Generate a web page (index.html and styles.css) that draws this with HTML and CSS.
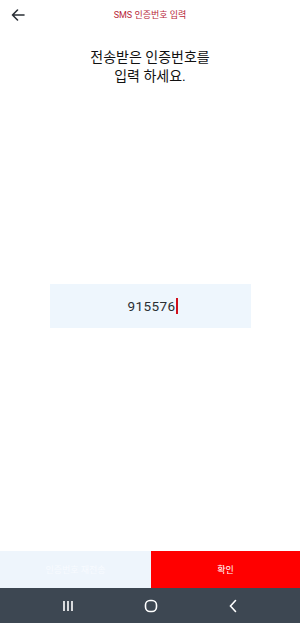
FILE: index.html
```html
<!DOCTYPE html>
<html>
<head>
    <meta charset="utf-8">
    <link rel="stylesheet" href="styles.css">
</head>
<body>
    <div class="screen">
        <div class="header">
            <button class="back-btn" title="뒤로">
                <svg width="14" height="12" viewBox="0 0 14 12"><path d="M13 6H1.5M6.5 1L1.5 6l5 5" fill="none" stroke="#2a2f36" stroke-width="1.6" stroke-linecap="round" stroke-linejoin="round"/></svg>
            </button>
            <div class="header-title">SMS 인증번호 입력</div>
        </div>

        <div class="guide">전송받은 인증번호를<br>입력 하세요.</div>

        <div class="code-box">
            <span class="code-text">915576</span><span class="caret"></span>
        </div>

        <div class="bottom-actions">
            <button class="btn btn-resend">인증번호 재전송</button>
            <button class="btn btn-confirm">확인</button>
        </div>

        <div class="nav-bar">
            <svg width="12" height="12" viewBox="0 0 12 12"><path d="M2 1v10M6 1v10M10 1v10" stroke="#fff" stroke-width="1.6"/></svg>
            <svg width="14" height="14" viewBox="0 0 14 14"><rect x="1.5" y="1.5" width="11" height="11" rx="4.5" fill="none" stroke="#fff" stroke-width="1.6"/></svg>
            <svg width="10" height="14" viewBox="0 0 10 14"><path d="M7.5 1.5L2.5 7l5 5.5" fill="none" stroke="#fff" stroke-width="1.6" stroke-linecap="round"/></svg>
        </div>
    </div>
</body>
</html>
```

FILE: styles.css
```css
body {
    margin: 0;
    font-family: Roboto, "Noto Sans CJK KR", sans-serif;
    background: #fff;
}

.screen {
    width: 300px;
    height: 623px;
    display: flex;
    flex-direction: column;
}

.header {
    position: relative;
    height: 30px;
    display: flex;
    align-items: center;
    justify-content: center;
}

.back-btn {
    position: absolute;
    left: 10px;
    top: 8px;
    border: none;
    background: none;
    padding: 0;
    width: 16px;
    height: 14px;
    display: flex;
    align-items: center;
    justify-content: center;
}

.header-title {
    font-size: 9px;
    color: #b8283a;
    margin-top: -2px;
}

.guide {
    margin-top: 18px;
    text-align: center;
    font-size: 14px;
    line-height: 19px;
    color: #111;
    font-weight: 400;
}

.code-box {
    margin: 198px auto 0;
    width: 201px;
    height: 44px;
    background: #eef6fd;
    display: flex;
    align-items: center;
    justify-content: center;
}

.code-text {
    font-size: 13.5px;
    color: #2a2e33;
    letter-spacing: 0.4px;
    margin-left: 6px;
}

.caret {
    width: 2px;
    height: 16px;
    background: #d0101c;
    margin-left: 1px;
}

.bottom-actions {
    margin-top: auto;
    display: grid;
    grid-template-columns: 151px 149px;
    height: 37px;
}

.btn {
    border: none;
    font-family: inherit;
    font-size: 9px;
    color: #fff;
    padding: 0;
}

.btn-resend {
    background: #eef5fc;
    color: #f8fbff;
}

.btn-confirm {
    background: #ff0000;
}

.nav-bar {
    height: 35px;
    background: #3d4752;
    display: flex;
    align-items: center;
    justify-content: center;
    gap: 70px;
}
```
